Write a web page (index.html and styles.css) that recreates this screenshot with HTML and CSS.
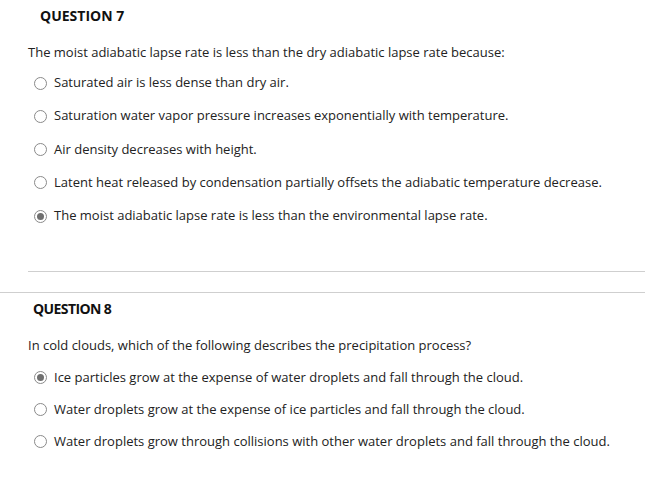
FILE: index.html
```html
<!DOCTYPE html>
<html>
<head>
<meta charset="utf-8">
<link rel="stylesheet" href="styles.css">
</head>
<body>
<section class="question q7">
  <h2 class="qtitle t7">QUESTION 7</h2>
  <p class="qtext">The moist adiabatic lapse rate is less than the dry adiabatic lapse rate because:</p>
  <ul class="options o7">
    <li class="option"><span class="radio"></span><span>Saturated air is less dense than dry air.</span></li>
    <li class="option"><span class="radio"></span><span>Saturation water vapor pressure increases exponentially with temperature.</span></li>
    <li class="option"><span class="radio"></span><span>Air density decreases with height.</span></li>
    <li class="option"><span class="radio"></span><span>Latent heat released by condensation partially offsets the adiabatic temperature decrease.</span></li>
    <li class="option"><span class="radio checked"></span><span>The moist adiabatic lapse rate is less than the environmental lapse rate.</span></li>
  </ul>
  <hr class="inner-rule">
</section>
<hr class="outer-rule">
<section class="question q8">
  <h2 class="qtitle t8">QUESTION 8</h2>
  <p class="qtext">In cold clouds, which of the following describes the precipitation process?</p>
  <ul class="options o8">
    <li class="option"><span class="radio checked"></span><span>Ice particles grow at the expense of water droplets and fall through the cloud.</span></li>
    <li class="option"><span class="radio"></span><span>Water droplets grow at the expense of ice particles and fall through the cloud.</span></li>
    <li class="option"><span class="radio"></span><span>Water droplets grow through collisions with other water droplets and fall through the cloud.</span></li>
  </ul>
</section>
</body>
</html>
```
FILE: styles.css
```css
html, body {
  margin: 0;
  padding: 0;
  background: #fff;
}
body {
  font-family: "Open Sans", "Liberation Sans", sans-serif;
  font-size: 13px;
  color: #222;
  width: 645px;
  height: 478px;
  overflow: hidden;
}
.question {
  display: flex;
  flex-direction: column;
}
.qtitle {
  margin: 0;
  font-size: 14px;
  line-height: 20px;
  font-weight: 700;
  color: #111;
}
.t7 {
  margin-top: 6px;
  padding-left: 40px;
}
.t8 {
  margin-top: 6px;
  padding-left: 33px;
  letter-spacing: -0.6px;
}
.qtext {
  margin: 18px 0 0 0;
  padding-left: 28px;
  line-height: 16px;
}
.options {
  list-style: none;
  margin: 14px 0 0 0;
  padding: 0 0 0 34px;
  display: flex;
  flex-direction: column;
}
.o7 { gap: 17.25px; }
.o8 { gap: 16px; margin-top: 15.5px; }
.option {
  display: flex;
  align-items: center;
  gap: 7px;
  line-height: 16px;
}
.radio {
  box-sizing: border-box;
  width: 13px;
  height: 13px;
  border: 1px solid #8a8a8a;
  border-radius: 50%;
  background: #fff;
  flex: none;
  display: flex;
  align-items: center;
  justify-content: center;
  position: relative;
  top: 1px;
}
.radio.checked::after {
  content: "";
  width: 7px;
  height: 7px;
  border-radius: 50%;
  background: #6f6f6f;
}
.inner-rule {
  margin: 48px 0 0 28px;
  border: 0;
  border-top: 1px solid #cfcfcf;
  height: 0;
}
.outer-rule {
  margin: 20px 0 0 0;
  border: 0;
  border-top: 1px solid #cfcfcf;
  height: 0;
}
```
